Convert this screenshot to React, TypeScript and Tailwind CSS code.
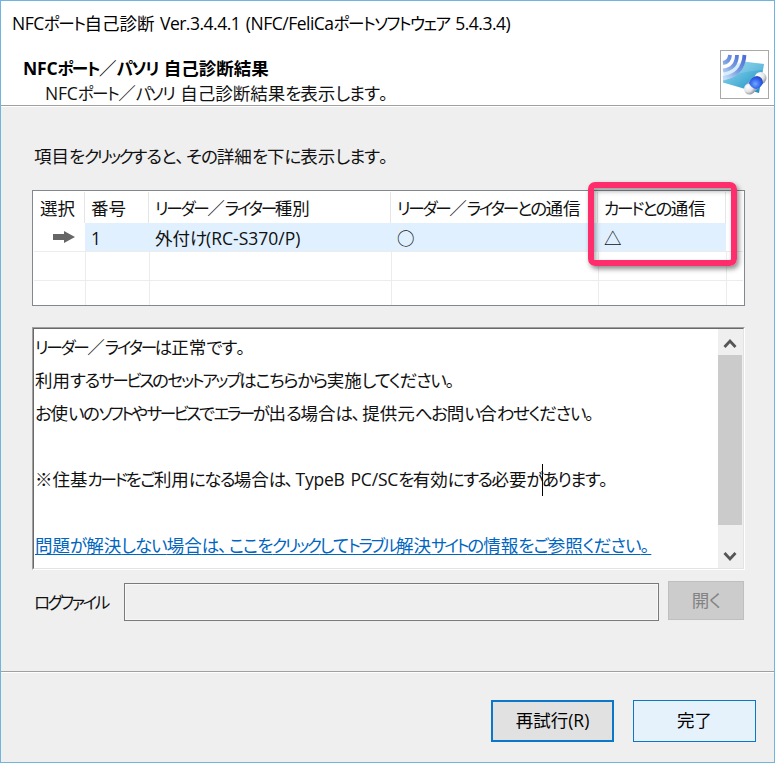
import clsx from "clsx";

const runs = /([\u3040-\u309f]+|[\u30a0-\u30ff]+|[\u3001\u3002]|[ -~]+)/;

// Kana are set proportionally and tighter than the kanji around them.
// A line can change the spacing with --hira, --kata and --latin.
function runClass(part: string) {
  if (/^[\u3040-\u309f]/.test(part)) return "tracking-(--hira) [font-feature-settings:'palt']";
  if (/^[\u30a0-\u30ff]/.test(part)) return "text-[0.95em] tracking-(--kata) [font-feature-settings:'palt']";
  if (/^[\u3001\u3002]/.test(part)) return "tracking-[2px] [font-feature-settings:'palt']";
  if (/^[ -~]/.test(part)) return "tracking-(--latin) [word-spacing:1.5px]";
  return undefined;
}

function Jp({ text }: { text: string }) {
  return (
    <>
      {text.split(runs).filter(Boolean).map((part, i) => (
        <span key={i} className={clsx("whitespace-pre", runClass(part))}>
          {part}
        </span>
      ))}
    </>
  );
}

function PasoriIcon() {
  return (
    <svg width="47" height="47" viewBox="0 0 47 47" fill="none">
      <defs>
        <linearGradient id="card" x1="0" y1="0" x2="1" y2="1">
          <stop offset="0" stopColor="#9ddaf0" />
          <stop offset="0.45" stopColor="#5cb9dc" />
          <stop offset="1" stopColor="#1789bd" />
        </linearGradient>
        <linearGradient id="wave" gradientUnits="userSpaceOnUse" x1="3" y1="26" x2="22" y2="5">
          <stop offset="0" stopColor="#c3dbf8" />
          <stop offset="0.5" stopColor="#7699e2" />
          <stop offset="1" stopColor="#4a70d6" />
        </linearGradient>
        <radialGradient id="white" cx="0.35" cy="0.3" r="0.75">
          <stop offset="0" stopColor="#ffffff" />
          <stop offset="0.6" stopColor="#e2e4e8" />
          <stop offset="1" stopColor="#8d9199" />
        </radialGradient>
        <radialGradient id="blue" cx="0.45" cy="0.6" r="0.65">
          <stop offset="0" stopColor="#71a8ff" />
          <stop offset="0.6" stopColor="#2f60ea" />
          <stop offset="1" stopColor="#2340b8" />
        </radialGradient>
      </defs>
      <path d="M3 18 22 10.500 43 13 38 42 2 31.500Z" fill="url(#card)" />
      <path d="M2 31Q15 20 42 19L43 13 22 10.500 3 18Z" fill="#c4f1fa" opacity="0.2" />
      <path d="M2 4H25Q24 26 2 29Z" fill="#fff" opacity="0.65" />
      <path d="M9 4Q8.500 11 2 12M16 4Q15.500 18 2 19.500M23.500 4Q22 24.500 2 27" stroke="url(#wave)" strokeWidth="3.800" />
      <path d="M28.500 38 39.500 27" stroke="#9ba8c8" strokeWidth="11" />
      <circle cx="39.500" cy="27" r="6" fill="url(#white)" />
      <circle cx="28.500" cy="38" r="5.500" fill="url(#white)" />
      <path d="M28 32Q30 26 36 25Q42 26 42 32Q40 37 35 38Q30 37 28 32Z" fill="url(#blue)" />
    </svg>
  );
}

const headers = [
  { text: "選択", width: "w-[52px]", pad: "pl-[7px]" },
  { text: "番号", width: "w-16", pad: "pl-1.5" },
  { text: "リーダー／ライター種別", width: "w-[242px]", pad: "pl-1.5" },
  { text: "リーダー／ライターとの通信", width: "w-[207px]", pad: "pl-1.5" },
  { text: "カードとの通信", width: "w-32", pad: "pl-1.5" },
];

const cells = [
  { text: "1", width: "w-16" },
  { text: "外付け(RC-S370/P)", width: "w-[242px]" },
  { text: "○", width: "w-[207px]" },
  { text: "△", width: "w-32" },
];

function ReaderTable() {
  return (
    <div className="relative ml-[31px] h-[116px] w-[713px] border border-[#828790] bg-white">
      <div className="flex h-8 pt-px [--hira:-1.7px]">
        {headers.map((h) => (
          <div key={h.text} className={clsx("shrink-0 border-r border-[#e5e5e5] leading-[33px]", h.width, h.pad)}>
            <Jp text={h.text} />
          </div>
        ))}
      </div>
      <div className="flex h-7">
        <div className="flex w-[52px] items-center justify-end pr-[10px]">
          <svg width="22" height="12" viewBox="0 0 22 12" fill="#666">
            <path d="M0 3H11V0L22 6 11 12V9H0Z" />
          </svg>
        </div>
        <div className="flex bg-[#e0f0ff] leading-[31px] [--latin:0px]">
          {cells.map((c) => (
            <div key={c.text} className={clsx("h-7 pl-1.5", c.width)}>
              <Jp text={c.text} />
            </div>
          ))}
        </div>
      </div>
      {["h-[29px]", "h-[25px]"].map((height) => (
        <div key={height} className={clsx("mx-px flex border-t border-[#ececec]", height)}>
          <div className="w-[52px] border-r border-[#ececec]" />
          <div className="w-16 border-r border-[#ececec]" />
          <div className="w-[242px] border-r border-[#ececec]" />
          <div className="w-[207px] border-r border-[#ececec]" />
          <div className="w-32 border-r border-[#ececec]" />
        </div>
      ))}
      <div className="absolute -top-[9px] left-[555px] h-[84px] w-[149px] rounded-[7px] border-[6px] border-[#ff2d6b] shadow-[2px_3px_5px_rgba(0,0,0,0.45),inset_2px_3px_5px_rgba(0,0,0,0.35)]" />
    </div>
  );
}

export default function App() {
  return (
    <div className="flex h-[763px] w-[775px] flex-col border border-[#6fb5e0] bg-[#efefef] font-['Open_Sans','Noto_Sans_CJK_JP',sans-serif] text-[17.5px] whitespace-nowrap text-[#111] [--hira:-1px] [--kata:-2.3px] [--latin:-0.2px]">
      <header className="flex h-[104px] shrink-0 justify-between bg-white">
        <div className="[--kata:-1.5px]">
          <h1 className="mt-2 ml-[11px] h-7 leading-7 text-black [--latin:-0.5px]">
            <Jp text="NFCポート自己診断 Ver.3.4.4.1 (NFC/FeliCaポートソフトウェア 5.4.3.4)" />
          </h1>
          <div className="mt-[19px] ml-[22px] h-6 leading-6 font-bold text-black">
            <Jp text="NFCポート／パソリ 自己診断結果" />
          </div>
          <div className="ml-11 h-6 leading-[26px]">
            <Jp text="NFCポート／パソリ 自己診断結果を表示します。" />
          </div>
        </div>
        <div className="mt-[49px] mr-[5px] h-[49px] w-[49px] border border-[#a8a8a8] bg-white">
          <PasoriIcon />
        </div>
      </header>
      <div className="h-0.5 shrink-0 border-t border-[#a0a0a0] bg-white" />

      <main className="h-[564px] shrink-0">
        <p className="mt-[35px] ml-[33px] h-7 leading-7">
          <Jp text="項目をクリックすると、その詳細を下に表示します。" />
        </p>
        <div className="h-5" />
        <ReaderTable />

        <div className="mt-[21px] ml-[31px] flex h-[243px] w-[713px] border border-t-[#a0a0a0] border-r-white border-b-white border-l-[#a0a0a0]">
          <div className="flex flex-1 border border-t-[#696969] border-r-[#e3e3e3] border-b-[#e3e3e3] border-l-[#696969] bg-white">
            <div className="flex-1 pt-0.5 pl-px leading-[33px]">
              <p><Jp text="リーダー／ライターは正常です。" /></p>
              <p className="[--hira:-1.3px]"><Jp text="利用するサービスのセットアップはこちらから実施してください。" /></p>
              <p className="[--hira:-1.35px] [--kata:-2.5px]"><Jp text="お使いのソフトやサービスでエラーが出る場合は、提供元へお問い合わせください。" /></p>
              <p className="h-[33px]" />
              <p className="flex h-[33px] items-center [--hira:-1.6px]">
                <span><Jp text="※住基カードをご利用になる場合は、TypeB PC/SCを有効にする必要が" /></span>
                <span className="-mr-px h-8 w-px bg-black" />
                <span><Jp text="あります。" /></span>
              </p>
              <p className="h-[33px]" />
              <a href="#" className="block text-[#0066bf] underline decoration-1 underline-offset-2">
                <Jp text="問題が解決しない場合は、ここをクリックしてトラブル解決サイトの情報をご参照ください。" />
              </a>
            </div>
            <div className="flex w-[25px] flex-col items-center bg-[#efefef]">
              <svg className="mt-[9px] mr-0.5" width="14" height="11" viewBox="0 0 14 11">
                <path d="M1.500 9 7 3 12.500 9" fill="none" stroke="#555" strokeWidth="2.800" />
              </svg>
              <div className="mt-[6px] mr-px h-[170px] w-6 bg-[#cbcbcb]" />
              <svg className="mt-[26px] mr-0.5" width="14" height="11" viewBox="0 0 14 11">
                <path d="M1.500 2 7 8 12.500 2" fill="none" stroke="#555" strokeWidth="2.800" />
              </svg>
            </div>
          </div>
        </div>

        <div className="mt-[11px] flex">
          <label className="ml-[33px] w-[90px] leading-[43px] [--kata:-2.5px]">
            <Jp text="ログファイル" />
          </label>
          <div className="mt-0.5 h-[38px] w-[535px] border border-[#7a7a7a] shadow-[inset_0_0_0_1px_#f8f8f8]" />
          <button className="ml-[9px] h-[39px] w-[76px] border border-[#bfbfbf] bg-[#cccccc] text-[#838383]">
            <Jp text="開く" />
          </button>
        </div>
      </main>

      <footer className="flex flex-1 justify-end gap-[19px] border-t border-[#a0a0a0] pt-7 pr-[18px] shadow-[inset_0_1px_#fff] text-black">
        <button className="h-[42px] w-[123px] border-2 border-[#0a77c9] bg-[#e1e1e1] pb-0.5">再試行(R)</button>
        <button className="h-[42px] w-[123px] border border-[#0a77c9] bg-[#e5f1fb] pb-0.5">完了</button>
      </footer>
    </div>
  );
}
